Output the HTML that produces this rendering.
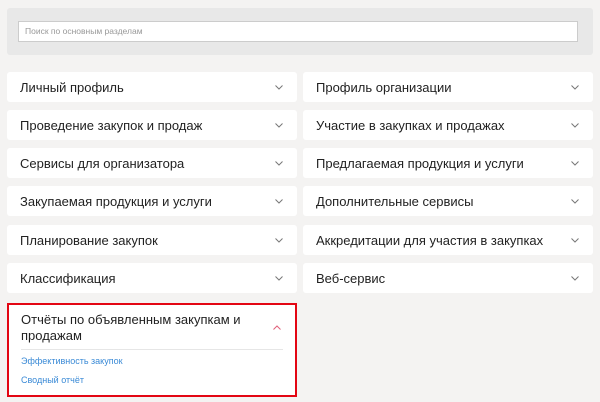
<!DOCTYPE html><html><head><meta charset="utf-8"><style>
body{margin:0;width:600px;height:402px;background:#f4f3f2;font-family:"Liberation Sans",sans-serif;position:relative;overflow:hidden}
.sp{position:absolute;left:7px;top:8px;width:586px;height:47px;background:#e8e8e8;border-radius:3px}
.in{position:absolute;left:11px;top:13px;background:#fff;border:1px solid #ccc;font-size:8.5px;color:#999;line-height:19px;padding-left:6px;box-sizing:border-box;width:560px;height:21px}
.c{position:absolute;width:290px;height:30px;background:#fff;border-radius:3px;font-size:13px;color:#222;line-height:31px;padding-left:13px;box-sizing:border-box}
.c svg{position:absolute;right:14px;top:13px}
.r{position:absolute;left:7px;top:303px;width:290px;height:94px;background:#fff;border:2px solid #e30613;box-sizing:border-box}
.r .t{position:absolute;left:12px;top:7px;font-size:13px;color:#222;line-height:16px;width:240px}
.r .d{position:absolute;left:12px;right:12px;top:44px;border-top:1px solid #e6e6e6}
.r a{position:absolute;left:12px;font-size:9px;color:#3a8ad6;text-decoration:none}
</style></head><body>
<div class="sp"><div class="in">Поиск по основным разделам</div></div>
<div class="c" style="left:7px;top:72px">Личный профиль<svg width="8" height="5"><path d="M.5.5l3.5 3.5L7.5.5" fill="none" stroke="#777" stroke-width="1"/></svg></div>
<div class="c" style="left:303px;top:72px">Профиль организации<svg width="8" height="5"><path d="M.5.5l3.5 3.5L7.5.5" fill="none" stroke="#777" stroke-width="1"/></svg></div>
<div class="c" style="left:7px;top:110px">Проведение закупок и продаж<svg width="8" height="5"><path d="M.5.5l3.5 3.5L7.5.5" fill="none" stroke="#777" stroke-width="1"/></svg></div>
<div class="c" style="left:303px;top:110px">Участие в закупках и продажах<svg width="8" height="5"><path d="M.5.5l3.5 3.5L7.5.5" fill="none" stroke="#777" stroke-width="1"/></svg></div>
<div class="c" style="left:7px;top:148px">Сервисы для организатора<svg width="8" height="5"><path d="M.5.5l3.5 3.5L7.5.5" fill="none" stroke="#777" stroke-width="1"/></svg></div>
<div class="c" style="left:303px;top:148px">Предлагаемая продукция и услуги<svg width="8" height="5"><path d="M.5.5l3.5 3.5L7.5.5" fill="none" stroke="#777" stroke-width="1"/></svg></div>
<div class="c" style="left:7px;top:186px">Закупаемая продукция и услуги<svg width="8" height="5"><path d="M.5.5l3.5 3.5L7.5.5" fill="none" stroke="#777" stroke-width="1"/></svg></div>
<div class="c" style="left:303px;top:186px">Дополнительные сервисы<svg width="8" height="5"><path d="M.5.5l3.5 3.5L7.5.5" fill="none" stroke="#777" stroke-width="1"/></svg></div>
<div class="c" style="left:7px;top:225px">Планирование закупок<svg width="8" height="5"><path d="M.5.5l3.5 3.5L7.5.5" fill="none" stroke="#777" stroke-width="1"/></svg></div>
<div class="c" style="left:303px;top:225px">Аккредитации для участия в закупках<svg width="8" height="5"><path d="M.5.5l3.5 3.5L7.5.5" fill="none" stroke="#777" stroke-width="1"/></svg></div>
<div class="c" style="left:7px;top:263px">Классификация<svg width="8" height="5"><path d="M.5.5l3.5 3.5L7.5.5" fill="none" stroke="#777" stroke-width="1"/></svg></div>
<div class="c" style="left:303px;top:263px">Веб-сервис<svg width="8" height="5"><path d="M.5.5l3.5 3.5L7.5.5" fill="none" stroke="#777" stroke-width="1"/></svg></div>
<div class="r"><div class="t">Отчёты по объявленным закупкам и продажам</div>
<svg width="8" height="5" style="position:absolute;right:14px;top:20px"><path d="M.5 4.5L4 1l3.5 3.5" fill="none" stroke="#e0607a" stroke-width="1"/></svg>
<div class="d"></div>
<a style="top:51px">Эффективность закупок</a><a style="top:70px">Сводный отчёт</a></div>
</body></html>
